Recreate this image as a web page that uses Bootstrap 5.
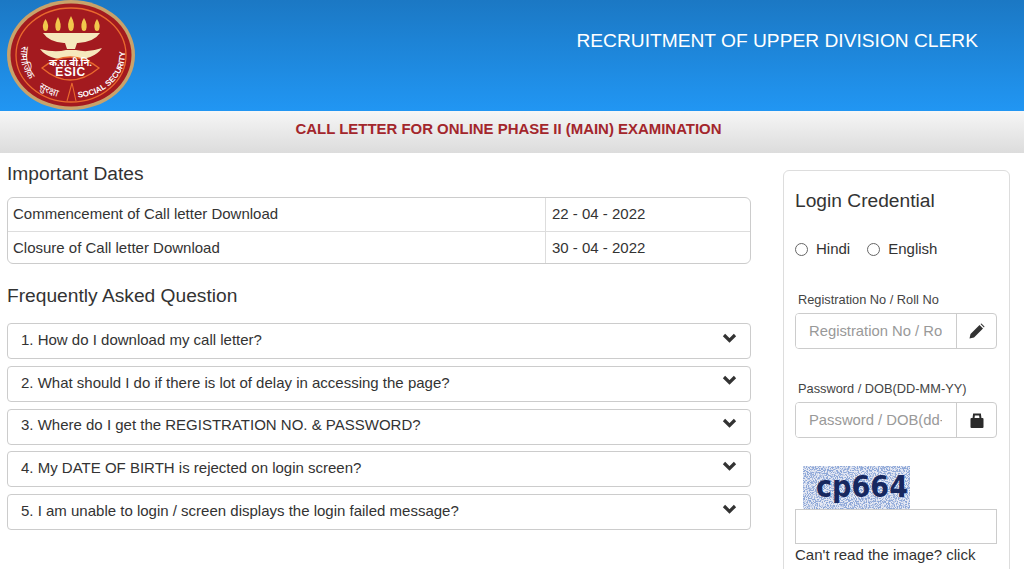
<!DOCTYPE html>
<html lang="en">
<head>
<meta charset="utf-8">
<title>Recruitment of Upper Division Clerk</title>
<link href="https://cdn.jsdelivr.net/npm/bootstrap@5.3.0/dist/css/bootstrap.min.css" rel="stylesheet">
<style>
html,body{height:569px;overflow:hidden;}
body{font-family:"Liberation Sans",Arial,sans-serif;color:#333;font-size:15px;background:#fff;}
.top-band{height:111px;background:linear-gradient(#1b78c4,#2196f3);padding-right:46px;}
.top-band h1{font-size:19.2px;font-weight:400;color:#fff;margin:0;padding-top:30px;line-height:22px;}
.logo-svg{width:130px;height:111px;margin-left:6px;display:block;}
.sub-band{height:42px;background:linear-gradient(#f6f6f6,#dcdcdc);padding-right:7px;}
.sub-band h2{font-size:14.95px;font-weight:700;color:#a3262c;margin:0;line-height:35px;}
.page-wrap{padding:0 14px 0 7px;gap:32px;}
.left-col{width:744px;flex:none;}
.right-col{width:227px;flex:none;}
.sec-title{font-size:19.2px;font-weight:400;line-height:22px;margin:10px 0 12px;color:#333;}
.sec-faq{margin:0 0 16px;}
.date-box{border:1px solid #ccc;border-radius:6px;overflow:hidden;margin-bottom:21px;}
.date-row{height:33px;line-height:32px;}
.date-row+.date-row{border-top:1px solid #ddd;height:32px;line-height:31px;}
.date-name{width:538px;padding-left:5px;border-right:1px solid #ddd;}
.date-val{padding-left:6px;}
.faq-item{height:36px;border:1px solid #ccc;border-radius:4px;margin-bottom:6.75px;padding:0 13px 2px;}
.chev{width:15px;height:12px;margin-top:-5px;}
.login-box{border:1px solid #ddd;border-radius:6px;margin-top:17px;height:460px;padding:0 12px 0 11px;}
.login-box h3{font-size:19.2px;font-weight:400;line-height:22px;margin:19px 0 27px;color:#333;}
.radio-row{gap:17px;line-height:20px;margin-bottom:34px;}
.radio-dot{width:13px;height:13px;border:1px solid #666;border-radius:50%;margin-right:8px;appearance:none;}
.fld-label{font-size:12.8px;line-height:14px;margin:0 0 6px 3px;color:#444;display:block;}
.fld-group{height:36px;border:1px solid #ccc;border-radius:4px;margin-bottom:33px;overflow:hidden;}
.fld-last{margin-bottom:28px;}
.fld-group input{flex:1;min-width:0;width:100%;border:0;padding:0 14px 0 13px;font-size:14.8px;color:#555;font-family:inherit;outline:0;background:#fff;}
.fld-group input::placeholder{color:#999;opacity:1;}
.fld-btn{width:40px;flex:none;border-left:1px solid #ccc;}
.captcha-pic{width:107px;height:43px;margin-left:8px;display:block;}
.captcha-in{display:block;width:100%;height:35px;border:1px solid #ccc;background:#fff;}
.help-line{line-height:20px;margin-top:1px;}
</style>
</head>
<body>
<header class="top-band d-flex justify-content-between">
  <svg class="logo-svg" viewBox="6 0 130 111" role="img" aria-label="ESIC logo">
    <defs>
      <path id="arcL" d="M22 46 A50 43 0 0 0 66 98"/>
      <path id="arcR" d="M78 97.500 A50 43 0 0 0 120.500 37"/>
    </defs>
    <ellipse cx="71" cy="55" rx="64" ry="55" fill="#c9a26a"/>
    <ellipse cx="71" cy="55" rx="60.500" ry="51.500" fill="#a31a1f"/>
    <ellipse cx="71" cy="55" rx="55" ry="47" fill="none" stroke="#ea6a2e" stroke-width="1.300"/>
    <g fill="#f2c84c"><path d="M45.500 19 q-4 6 -2 11 q2 2 4 0 q2-5 -2-11z"/><path d="M58 17 q-4 7 -2 13 q2 2 4 0 q2-6 -2-13z"/><path d="M71 16 q-4.500 8 -2 14 q2 2 4 0 q2.500-6 -2-14z"/><path d="M84 18 q-4 6 -2 12 q2 2 4 0 q2-6 -2-12z"/><path d="M97 19 q-4 6 -2 11 q2 2 4 0 q2-5 -2-11z"/></g>
    <g fill="#f6e8bd">
      <path d="M43 33 H100 Q94 42 78 43 H64 Q49 42 43 33z"/>
      <path d="M65 43 H77 L75 49 H67z"/>
      <path d="M40 49 Q55 53 66 50 H76 Q88 53 102 48 Q94 60 71 60 Q48 60 40 49z"/>
    </g>
    <path d="M42 68 Q70 46 99 68 Q70 92 42 68z" fill="#a31a1f" stroke="#ea6a2e" stroke-width="1.300"/>
    <text x="70.500" y="66" font-size="9.500" fill="#fff" text-anchor="middle" font-family="'Noto Sans','Liberation Sans',sans-serif" font-weight="700">क.रा.बी.नि.</text>
    <text x="70.500" y="76" font-size="12" fill="#fff" text-anchor="middle" font-family="'Liberation Sans',sans-serif" font-weight="700" letter-spacing=".6">ESIC</text>
    <path d="M67 101 L72 83 L76 101" fill="none" stroke="#ea6a2e" stroke-width="1.100"/>
    <text font-size="10" fill="#fff" font-family="'Noto Sans','Liberation Sans',sans-serif"><textPath href="#arcL">सामाजिक</textPath></text>
    <text font-size="10" fill="#fff" font-family="'Noto Sans','Liberation Sans',sans-serif"><textPath href="#arcL" startOffset="48">सुरक्षा</textPath></text>
    <text font-size="8" font-weight="700" fill="#fff" font-family="'Liberation Sans',sans-serif"><textPath href="#arcR">SOCIAL SECURITY</textPath></text>
  </svg>
  <h1>RECRUITMENT OF UPPER DIVISION CLERK</h1>
</header>
<div class="sub-band text-center"><h2>CALL LETTER FOR ONLINE PHASE II (MAIN) EXAMINATION</h2></div>
<main class="page-wrap d-flex">
  <section class="left-col">
    <h4 class="sec-title">Important Dates</h4>
    <div class="date-box">
      <div class="date-row d-flex"><div class="date-name">Commencement of Call letter Download</div><div class="date-val">22 - 04 - 2022</div></div>
      <div class="date-row d-flex"><div class="date-name">Closure of Call letter Download</div><div class="date-val">30 - 04 - 2022</div></div>
    </div>
    <h4 class="sec-title sec-faq">Frequently Asked Question</h4>
    <div class="faq-item d-flex justify-content-between align-items-center"><span>1. How do I download my call letter?</span><svg class="chev" viewBox="0 0 15 12"><path d="M2 3 L7.500 8.500 L13 3" fill="none" stroke="#333" stroke-width="3.200"/></svg></div>
    <div class="faq-item d-flex justify-content-between align-items-center"><span>2. What should I do if there is lot of delay in accessing the page?</span><svg class="chev" viewBox="0 0 15 12"><path d="M2 3 L7.500 8.500 L13 3" fill="none" stroke="#333" stroke-width="3.200"/></svg></div>
    <div class="faq-item d-flex justify-content-between align-items-center"><span>3. Where do I get the REGISTRATION NO. &amp; PASSWORD?</span><svg class="chev" viewBox="0 0 15 12"><path d="M2 3 L7.500 8.500 L13 3" fill="none" stroke="#333" stroke-width="3.200"/></svg></div>
    <div class="faq-item d-flex justify-content-between align-items-center"><span>4. My DATE OF BIRTH is rejected on login screen?</span><svg class="chev" viewBox="0 0 15 12"><path d="M2 3 L7.500 8.500 L13 3" fill="none" stroke="#333" stroke-width="3.200"/></svg></div>
    <div class="faq-item d-flex justify-content-between align-items-center"><span>5. I am unable to login / screen displays the login failed message?</span><svg class="chev" viewBox="0 0 15 12"><path d="M2 3 L7.500 8.500 L13 3" fill="none" stroke="#333" stroke-width="3.200"/></svg></div>
  </section>
  <aside class="right-col">
    <div class="login-box">
      <h3>Login Credential</h3>
      <div class="radio-row d-flex">
        <label class="d-flex align-items-center"><input type="radio" name="lang" class="radio-dot">Hindi</label>
        <label class="d-flex align-items-center"><input type="radio" name="lang" class="radio-dot">English</label>
      </div>
      <label class="fld-label">Registration No / Roll No</label>
      <div class="fld-group d-flex">
        <input type="text" placeholder="Registration No / Roll No">
        <div class="fld-btn d-flex align-items-center justify-content-center"><svg width="16" height="16" viewBox="0 0 16 16"><path d="M0.500 15.500 L1.500 11 L10.500 2 L14 5.500 L5 14.500z M11.500 1 L12.500 0.500 L15.500 3.500 L15 4.500z" fill="#333"/></svg></div>
      </div>
      <label class="fld-label">Password / DOB(DD-MM-YY)</label>
      <div class="fld-group fld-last d-flex">
        <input type="text" placeholder="Password / DOB(dd-mm-yy)">
        <div class="fld-btn d-flex align-items-center justify-content-center"><svg width="14" height="15" viewBox="0 0 14 15"><path d="M3.500 5.500 L4 1.500 H10 L10.500 5.500" fill="none" stroke="#2b2b2b" stroke-width="2"/><rect x="0.500" y="5" width="13" height="10" rx="1" fill="#2b2b2b"/></svg></div>
      </div>
      <svg class="captcha-pic" viewBox="0 0 107 43" role="img" aria-label="captcha">
        <defs>
          <filter id="speck" x="0" y="0" width="100%" height="100%">
            <feTurbulence type="fractalNoise" baseFrequency="0.9" numOctaves="2" seed="4"/>
            <feColorMatrix type="matrix" values="0 0 0 0 .27  0 0 0 0 .39  0 0 0 0 .69  7 0 0 0 -3.100"/>
          </filter>
        </defs>
        <rect width="107" height="43" fill="#e6e9f3"/>
        <rect width="107" height="43" filter="url(#speck)"/>
        <text x="13" y="31" font-family="'DejaVu Sans',sans-serif" font-weight="700" font-size="31" fill="#17285f" textLength="92" lengthAdjust="spacingAndGlyphs">cp664</text>
      </svg>
      <input class="captcha-in" type="text" aria-label="captcha">
      <div class="help-line">Can't read the image? click here to refresh</div>
    </div>
  </aside>
</main>
<script src="https://cdn.jsdelivr.net/npm/bootstrap@5.3.0/dist/js/bootstrap.bundle.min.js"></script>
</body>
</html>
